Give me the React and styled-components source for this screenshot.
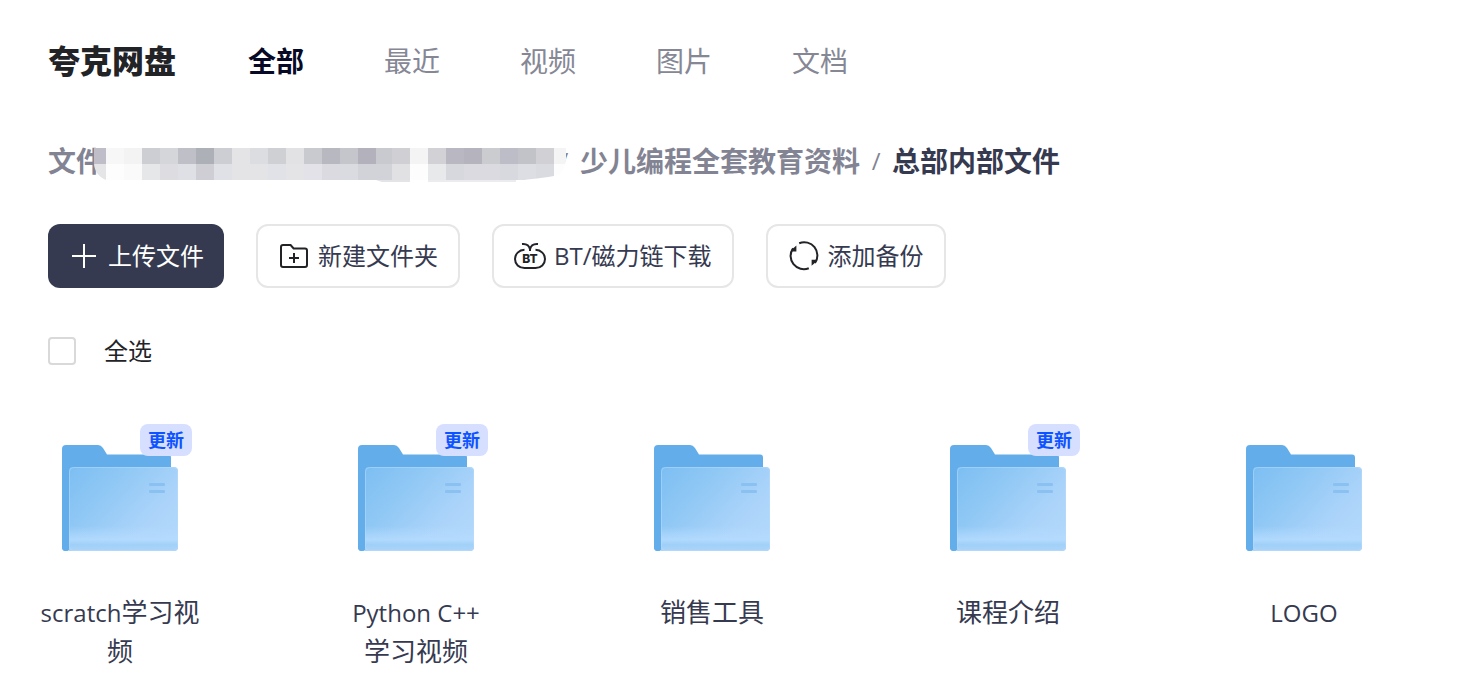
import React, { useState } from "react";
import styled, { createGlobalStyle } from "styled-components";

const GlobalStyle = createGlobalStyle`
  * {
    box-sizing: border-box;
  }
  body {
    margin: 0;
    background: #fff;
    color: #363a50;
    font-family: "Open Sans", "Noto Sans CJK SC", sans-serif;
  }
  button, input {
    font-family: inherit;
  }
`;

const Page = styled.div`
  padding: 32px 48px 24px;
`;

const Header = styled.header`
  display: flex;
  align-items: center;
  height: 58px;
`;

const Logo = styled.h1`
  margin: 0 72px 0 0;
  color: #222327;
  font-size: 32px;
  line-height: 58px;
  font-weight: 900;
  white-space: nowrap;
`;

const Nav = styled.nav`
  display: flex;
  gap: 80px;
`;

const NavLink = styled.a`
  color: ${({ $active }) => ($active ? "#060a26" : "#868795")};
  font-size: 28px;
  line-height: 40px;
  font-weight: ${({ $active }) => ($active ? 700 : 400)};
  text-decoration: none;
  white-space: nowrap;
`;

const Breadcrumb = styled.nav`
  display: flex;
  align-items: center;
  height: 40px;
  margin-top: 51px;
  font-size: 28px;
  line-height: 40px;
  font-weight: 700;
  white-space: nowrap;
`;

const Crumb = styled.a`
  color: #838493;
  text-decoration: none;
`;

const CurrentCrumb = styled.span`
  color: #363a50;
`;

const Separator = styled.span`
  width: 32px;
  color: #838493;
  font-size: 24px;
  font-weight: 400;
  text-align: center;
`;

const MaskedCrumb = styled.span`
  position: relative;
  width: 444px;
  height: 40px;

  svg {
    position: absolute;
    top: 7px;
    left: -10px;
    z-index: 1;
  }
`;

const Toolbar = styled.div`
  display: flex;
  flex-wrap: wrap;
  gap: 32px;
  margin-top: 43px;
`;

const ToolButton = styled.button`
  display: flex;
  align-items: center;
  gap: 8px;
  height: 64px;
  padding: 0 20px;
  border: ${({ $primary }) => ($primary ? "0" : "2px solid #e6e6e6")};
  border-radius: 12px;
  background: ${({ $primary }) => ($primary ? "#363a50" : "#fff")};
  color: ${({ $primary }) => ($primary ? "#fff" : "#363a50")};
  font-size: 24px;
  line-height: 32px;
  white-space: nowrap;
  cursor: pointer;
`;

const SelectAll = styled.label`
  display: flex;
  align-items: center;
  gap: 28px;
  width: max-content;
  height: 32px;
  margin-top: 47px;
  color: #222327;
  font-size: 24px;
  line-height: 32px;
`;

const Checkbox = styled.input`
  appearance: none;
  width: 28px;
  height: 28px;
  margin: 0;
  border: 2px solid #d9d9d9;
  border-radius: 4px;
  background: ${({ checked }) => (checked ? "#363a50" : "#fff")};
`;

const FileGrid = styled.div`
  display: grid;
  grid-template-columns: repeat(auto-fill, 160px);
  gap: 32px 136px;
  margin: 57px -8px 0;
`;

const FileItem = styled.div`
  display: flex;
  flex-direction: column;
  align-items: center;
`;

const Thumb = styled.div`
  position: relative;
  display: flex;
  align-items: center;
  justify-content: center;
  width: 144px;
  height: 148px;
`;

const Badge = styled.span`
  position: absolute;
  top: 0;
  right: 0;
  padding: 0 8px;
  border-radius: 8px;
  background: #d6dfff;
  color: #0d53ff;
  font-size: 18px;
  line-height: 32px;
  font-weight: 700;
`;

const FileName = styled.div`
  width: 160px;
  margin-top: 21px;
  font-size: 26px;
  line-height: 39px;
  text-align: center;
`;

const Latin = styled.span`
  font-size: 24px;
  line-height: 24px;
`;

const MOSAIC = [
  // x, width, top color, bottom color
  [0, 12, "#bfbec8", "#e5e5e7"],
  [12, 18, "#f7f7f7", "#fdfdfd"],
  [30, 18, "#f3f3f3", "#fafafa"],
  [48, 18, "#cdced3", "#e6e7e9"],
  [66, 18, "#d5d6da", "#dcdce1"],
  [84, 18, "#bfbfc8", "#dfe0e5"],
  [102, 18, "#adb0b7", "#cfced4"],
  [120, 18, "#cdced3", "#e0e1e6"],
  [138, 18, "#e4e4e6", "#e4e4e6"],
  [156, 18, "#dcdde0", "#e4e4e6"],
  [174, 18, "#cfd0d4", "#e1e2e7"],
  [192, 18, "#e2e2e4", "#e4e4e6"],
  [210, 18, "#c9cacf", "#e2e2e8"],
  [228, 18, "#b8b8c1", "#dadae0"],
  [246, 18, "#c5c6cb", "#dadbe0"],
  [264, 18, "#b2b1bc", "#d2d3d9"],
  [282, 16, "#c9cacf", "#d2d3d9"],
  [298, 18, "#cfcfd4", "#e1e1e3"],
  [316, 18, "#f4f4f4", "#fdfdfd"],
  [334, 18, "#d1d1d6", "#e8e9eb"],
  [352, 18, "#b8b7c2", "#d7d8dd"],
  [370, 18, "#b4b3be", "#dadae0"],
  [388, 18, "#cbccd0", "#dadae0"],
  [406, 18, "#bdbdc7", "#d8d9de"],
  [424, 18, "#c2c3c8", "#dddee3"],
  [442, 18, "#d0d0d5", "#dadbe0"],
  [460, 12, "#f4f4f4", "#fdfdfd"],
];

const Mosaic = () => (
  <svg width="472" height="34" viewBox="0 0 472 34" aria-hidden="true">
    <defs>
      <clipPath id="mosaicEdge">
        <path d="M0 0H472V12C471 18 469 22 466 26L460 28C444 31 430 31 422 34H288L282 32H12C5 29 0 23 0 15Z" />
      </clipPath>
    </defs>
    <g clipPath="url(#mosaicEdge)" shapeRendering="crispEdges">
      {MOSAIC.map(([x, w, top, bottom]) => (
        <React.Fragment key={x}>
          <rect x={x} y="0" width={w} height="16" fill={top} />
          <rect x={x} y="16" width={w} height="16" fill={bottom} />
        </React.Fragment>
      ))}
      <rect x="282" y="32" width="34" height="2" fill="#e3e4e7" />
      <rect x="334" y="32" width="88" height="2" fill="#ececef" />
    </g>
  </svg>
);

const PlusIcon = () => (
  <svg width="32" height="32" viewBox="0 0 32 32" aria-hidden="true">
    <path d="M4 16H28M16 4V28" stroke="#fff" strokeWidth="2" />
  </svg>
);

const NewFolderIcon = () => (
  <svg width="32" height="32" viewBox="0 0 32 32" fill="none" stroke="#222327" strokeWidth="2" aria-hidden="true">
    <path d="M5 5H12.6L15.6 8.4H27Q29 8.4 29 10.4V25Q29 27 27 27H5Q3 27 3 25V7Q3 5 5 5Z" />
    <path d="M11 18H21M16 13V23" />
  </svg>
);

const BtIcon = () => (
  <svg width="32" height="32" viewBox="0 0 32 32" fill="none" stroke="#222327" strokeWidth="2" aria-hidden="true">
    <path d="M10.5 9.8C5 10 1 14 1 19C1 24.2 5 28 10.5 28H21.5C27 28 31 24.2 31 19C31 14 27 10 21.5 9.8" />
    <path d="M8 4C12.5 3.6 15.2 5.6 16 9.2C16.8 5.6 19.5 3.6 24 4" />
    <path d="M16 7V11" />
    <text
      x="16"
      y="23"
      fill="#222327"
      stroke="none"
      fontFamily="Inter, sans-serif"
      fontSize="12"
      fontWeight="800"
      textAnchor="middle"
    >
      BT
    </text>
  </svg>
);

const BackupIcon = () => (
  <svg width="32" height="32" viewBox="0 0 32 32" fill="none" stroke="#222327" strokeWidth="2" aria-hidden="true">
    <path d="M11.2 3.2A13.2 13.2 0 0 1 27 23" />
    <path d="M20.8 28.2A13.2 13.2 0 0 1 5 8.4" />
    <path d="M3.8 9.6L8.4 5.6V11.6H3.4Z" fill="#222327" stroke="none" />
    <path d="M28.2 21.8L23.6 25.8V19.8H28.6Z" fill="#222327" stroke="none" />
  </svg>
);

const FolderPicture = () => (
  <svg width="116" height="108" viewBox="0 0 116 108" aria-hidden="true">
    <defs>
      <linearGradient id="folderFront" x1="0" y1="0" x2="1" y2="0.7">
        <stop offset="0" stopColor="#7cbef2" />
        <stop offset="0.4" stopColor="#92c9f5" />
        <stop offset="0.8" stopColor="#acd4fa" />
        <stop offset="1" stopColor="#b0d7fb" />
      </linearGradient>
      <linearGradient id="folderShine" x1="0" y1="0" x2="0" y2="1">
        <stop offset="0" stopColor="#b5dbff" stopOpacity="0" />
        <stop offset="0.55" stopColor="#b5dbff" stopOpacity="0.85" />
        <stop offset="0.75" stopColor="#a0d0f8" stopOpacity="0.9" />
        <stop offset="1" stopColor="#abd5f9" />
      </linearGradient>
    </defs>
    <path
      d="M4 1H36Q39 1 41 4L45 10.5H106Q109 10.5 109 13.5V40H8V104Q8 107 4 107Q0 107 0 103V5Q0 1 4 1Z"
      fill="#63aeea"
    />
    <rect x="7" y="23" width="109" height="84" rx="4" fill="url(#folderFront)" />
    <path d="M7 82H116V103Q116 107 112 107H7Z" fill="url(#folderShine)" />
    <path d="M0 80H7V104Q7 107 3.5 107Q0 107 0 103Z" fill="#63aeea" />
    <rect x="7.5" y="23.5" width="108" height="83" rx="4" fill="none" stroke="#b9dcfb" strokeOpacity="0.5" />
    <rect x="87" y="39" width="16" height="3" rx="1" fill="#8bc1f0" />
    <rect x="87" y="46" width="16" height="3" rx="1" fill="#8bc1f0" />
  </svg>
);

const tabs = ["全部", "最近", "视频", "图片", "文档"];

const files = [
  { latin: "scratch", name: "学习视频", updated: true },
  { latin: "Python C++", name: " 学习视频", updated: true },
  { name: "销售工具" },
  { name: "课程介绍", updated: true },
  { latin: "LOGO" },
];

const App = () => {
  const [activeTab, setActiveTab] = useState("全部");
  const [allSelected, setAllSelected] = useState(false);

  return (
    <>
      <GlobalStyle />
      <Page>
        <Header>
          <Logo>夸克网盘</Logo>
          <Nav>
            {tabs.map((tab) => (
              <NavLink key={tab} href="#" $active={tab === activeTab} onClick={() => setActiveTab(tab)}>
                {tab}
              </NavLink>
            ))}
          </Nav>
        </Header>

        <Breadcrumb>
          <Crumb href="#">文件</Crumb>
          <MaskedCrumb>
            <Mosaic />
          </MaskedCrumb>
          <Separator>/</Separator>
          <Crumb href="#">少儿编程全套教育资料</Crumb>
          <Separator>/</Separator>
          <CurrentCrumb>总部内部文件</CurrentCrumb>
        </Breadcrumb>

        <Toolbar>
          <ToolButton $primary>
            <PlusIcon />
            上传文件
          </ToolButton>
          <ToolButton>
            <NewFolderIcon />
            新建文件夹
          </ToolButton>
          <ToolButton>
            <BtIcon />
            BT/磁力链下载
          </ToolButton>
          <ToolButton>
            <BackupIcon />
            添加备份
          </ToolButton>
        </Toolbar>

        <SelectAll>
          <Checkbox type="checkbox" checked={allSelected} onChange={() => setAllSelected(!allSelected)} />
          全选
        </SelectAll>

        <FileGrid>
          {files.map((file, index) => (
            <FileItem key={index}>
              <Thumb>
                <FolderPicture />
                {file.updated && <Badge>更新</Badge>}
              </Thumb>
              <FileName>
                {file.latin && <Latin>{file.latin}</Latin>}
                {file.name}
              </FileName>
            </FileItem>
          ))}
        </FileGrid>
      </Page>
    </>
  );
};

export default App;
